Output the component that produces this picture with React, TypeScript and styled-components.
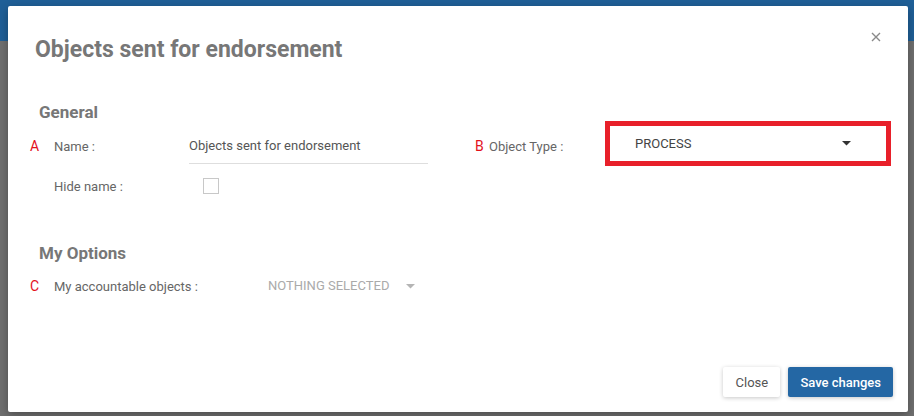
import React, { useState } from 'react'
import styled, { createGlobalStyle } from 'styled-components'

const GlobalStyle = createGlobalStyle`
  html, body {
    margin: 0;
    padding: 0;
    width: 914px;
    height: 416px;
    overflow: hidden;
    font-family: Roboto, 'Liberation Sans', Arial, sans-serif;
  }
`

export default function App() {
  const [hideName, setHideName] = useState(false)

  return (
    <Page>
      <GlobalStyle />
      <TopBar />
      <Modal>
        <Header>
          <Title>Objects sent for endorsement</Title>
          <CloseIcon aria-label="Close">
            <svg width="10" height="10" viewBox="0 0 10 10">
              <path d="M1 1 L9 9 M9 1 L1 9" stroke="#8a8a8a" strokeWidth="1.4" />
            </svg>
          </CloseIcon>
        </Header>

        <Body>
          <SectionTitle>General</SectionTitle>
          <Row>
            <Marker>A</Marker>
            <Label width={135}>Name :</Label>
            <TextInput defaultValue="Objects sent for endorsement" />
            <Marker $gap={47} $width={14}>B</Marker>
            <Label width={116}>Object Type :</Label>
            <HighlightedSelect>
              <SelectValue>PROCESS</SelectValue>
              <Caret color="#333" />
            </HighlightedSelect>
          </Row>
          <Row $top={10} $height={24}>
            <Marker />
            <Label width={149}>Hide name :</Label>
            <Checkbox checked={hideName} onClick={() => setHideName(!hideName)} />
          </Row>

          <SectionTitle $top={45}>My Options</SectionTitle>
          <Row $top={11} $height={24}>
            <Marker>C</Marker>
            <Label width={214}>My accountable objects :</Label>
            <PlainSelect>
              <SelectValue $muted>NOTHING SELECTED</SelectValue>
              <Caret color="#b5b5b5" />
            </PlainSelect>
          </Row>
        </Body>

        <Footer>
          <Button>Close</Button>
          <Button $primary>Save changes</Button>
        </Footer>
      </Modal>
    </Page>
  )
}

const Caret = ({ color }: { color: string }) => (
  <svg width="9" height="5" viewBox="0 0 9 5">
    <path d="M0 0 L9 0 L4.5 4.5 Z" fill={color} />
  </svg>
)

const Page = styled.div`
  position: relative;
  width: 914px;
  height: 416px;
  background: #6f6f6f;
`

const TopBar = styled.div`
  height: 41px;
  background: #1f5f97;
`

const Modal = styled.div`
  position: absolute;
  left: 8px;
  top: 6px;
  width: 900px;
  height: 406px;
  background: #fff;
  border-radius: 2px;
  box-shadow: 0 3px 10px rgba(0, 0, 0, 0.3);
  display: flex;
  flex-direction: column;
  box-sizing: border-box;
`

const Header = styled.div`
  display: flex;
  justify-content: space-between;
  align-items: flex-start;
  padding: 31px 27px 0 27px;
`

const Title = styled.h1`
  margin: 0;
  font-size: 23px;
  line-height: 26px;
  font-weight: 700;
  color: #777;
`

const CloseIcon = styled.button`
  border: none;
  background: transparent;
  padding: 0;
  margin-top: -5px;
  width: 10px;
  height: 10px;
  display: flex;
  cursor: pointer;
`

const Body = styled.div`
  padding: 0 17px 0 22px;
`

const SectionTitle = styled.h2<{ $top?: number }>`
  margin: ${({ $top }) => $top ?? 39}px 0 0 9px;
  font-size: 17px;
  line-height: 20px;
  font-weight: 700;
  color: #777;
`

const Row = styled.div<{ $top?: number; $height?: number }>`
  display: flex;
  align-items: center;
  margin-top: ${({ $top }) => $top ?? 6}px;
  height: ${({ $height }) => $height ?? 36}px;
`

const Marker = styled.span<{ $gap?: number; $width?: number }>`
  width: ${({ $width }) => $width ?? 24}px;
  margin-left: ${({ $gap }) => $gap ?? 0}px;
  flex: none;
  font-size: 14px;
  color: #e3101c;
`

const Label = styled.span<{ width: number }>`
  width: ${({ width }) => width}px;
  flex: none;
  font-size: 13px;
  color: #666;
`

const TextInput = styled.input`
  width: 239px;
  height: 36px;
  box-sizing: border-box;
  flex: none;
  border: none;
  border-bottom: 1px solid #dedede;
  padding: 0;
  outline: none;
  font-family: inherit;
  font-size: 13px;
  color: #555;
  background: transparent;
`

const HighlightedSelect = styled.div`
  align-self: flex-start;
  margin-top: -7px;
  width: 286px;
  height: 45px;
  box-sizing: border-box;
  border: 5px solid #e8202a;
  display: flex;
  align-items: center;
  justify-content: space-between;
  padding: 0 35px 0 25px;
`

const PlainSelect = styled.div`
  display: flex;
  align-items: center;
  gap: 17px;
`

const SelectValue = styled.span<{ $muted?: boolean }>`
  font-size: 13px;
  color: ${({ $muted }) => ($muted ? '#aaa' : '#444')};
  margin-top: -1px;
`

const Checkbox = styled.span<{ checked: boolean }>`
  width: 16px;
  height: 16px;
  box-sizing: border-box;
  border: 1px solid #c8c8c8;
  background: ${({ checked }) => (checked ? '#2467a4' : '#fff')};
  cursor: pointer;
`

const Footer = styled.div`
  margin-top: auto;
  display: flex;
  justify-content: flex-end;
  gap: 8px;
  padding: 0 15px 15px 0;
`

const Button = styled.button<{ $primary?: boolean }>`
  height: 30px;
  min-width: 57px;
  padding: 0 12px;
  border: none;
  border-radius: 2px;
  font-family: inherit;
  font-size: 13px;
  font-weight: ${({ $primary }) => ($primary ? 500 : 400)};
  color: ${({ $primary }) => ($primary ? '#fff' : '#555')};
  background: ${({ $primary }) => ($primary ? '#2467a4' : '#fff')};
  box-shadow: 0 1px 4px rgba(0, 0, 0, 0.22);
  cursor: pointer;
`
